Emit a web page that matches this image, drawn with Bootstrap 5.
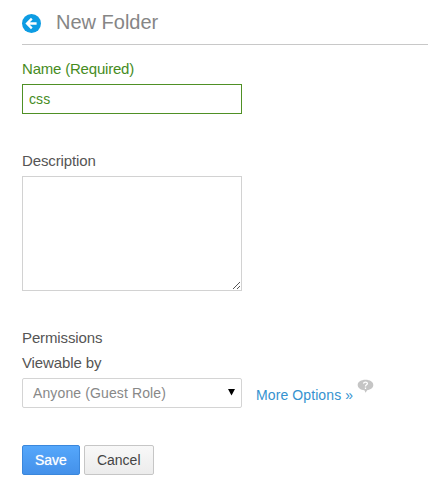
<!DOCTYPE html>
<html lang="en">
<head>
<meta charset="utf-8">
<meta name="viewport" content="width=device-width, initial-scale=1">
<title>New Folder</title>
<link rel="stylesheet" href="https://cdn.jsdelivr.net/npm/bootstrap@5.3.0/dist/css/bootstrap.min.css">
<style>
body{font-family:"Liberation Sans",Arial,sans-serif;font-size:15px;line-height:20px;color:#555;overflow:hidden}
.page{padding-left:22px}
.page-head{height:45px;border-bottom:1px solid #c8c8c8!important;padding-bottom:1px}
.page-head h1{font-size:20px;line-height:24px;color:#868686;font-weight:400;margin-left:15px}
.back-link{margin-top:3px}
.folder-form .form-label{display:block;margin:0;font-size:15px;line-height:20px;color:#555;letter-spacing:-.12px}
.folder-form .form-control,.folder-form .form-select{width:220px;border:1px solid #ccc;font-size:14px;box-shadow:none;background-color:#fff}
.folder-form .form-control{border-radius:0}
.name-group{padding-top:14px;height:92px}
.folder-form .name-group .form-label{color:#468c1e;letter-spacing:-.2px}
.folder-form .name-group .form-control{height:30px;margin-top:5px;padding:0 6px;color:#468c1e;border-color:#4f9025;letter-spacing:.1px}
.desc-group{height:175px;padding-top:14px}
.desc-group textarea.form-control{height:115px;margin-top:5px;resize:none;display:block;border-color:#d2d2d2}
.text-box{width:220px}
.grip{right:1px;bottom:1px}
.perm-group .form-label+.form-label{margin-top:5px!important}
.folder-form .form-select{height:30px;padding:0 30px 0 10px;color:#888;border-color:#d4d4d4;border-radius:2px;background-image:none;line-height:28px;letter-spacing:.12px}
.select-row{margin-top:5px}
.caret{right:7px;top:11px;pointer-events:none}
.more-link{font-size:14px;line-height:20px;color:#3592cf;margin:7px 0 0 14px;letter-spacing:.1px}
.help{margin:1px 0 0 4px}
.btn-form{height:30px;padding:0 12px;font-size:14px;line-height:28px;border-radius:2px}
.btn-save{color:#fff;background:linear-gradient(#55a7fb,#4491ea);border:1px solid #3a87dc;text-shadow:0 0 1px rgba(255,255,255,.7)}
.btn-cancel{color:#444;background:linear-gradient(#f8f8f8,#ececec);border:1px solid #c6c6c6}
.actions{margin-top:37px;gap:4px}
</style>
<script src="https://cdn.jsdelivr.net/npm/bootstrap@5.3.0/dist/js/bootstrap.bundle.min.js"></script>
</head>
<body class="bg-white">
<main class="page">
  <header class="page-head d-flex align-items-center border-bottom">
    <a href="#" class="back-link d-flex" aria-label="Back">
      <svg width="19" height="19" viewBox="0 0 19 19"><circle cx="9.5" cy="9.5" r="9.5" fill="#0d9ce3"/><path d="M9.800 4.600 5 9.500 9.800 14.400M5.500 9.500H14.600" fill="none" stroke="#fff" stroke-width="2.300"/></svg>
    </a>
    <h1 class="mb-0">New Folder</h1>
  </header>
  <form class="folder-form">
    <div class="name-group">
      <label class="form-label" for="name">Name (Required)</label>
      <input class="form-control" id="name" type="text" value="css">
    </div>
    <div class="desc-group">
      <label class="form-label" for="desc">Description</label>
      <div class="text-box position-relative">
        <textarea class="form-control" id="desc"></textarea>
        <svg class="grip position-absolute" width="9" height="9" viewBox="0 0 9 9"><path d="M1 8 8 1M5 8 8 5" stroke="#555" fill="none"/></svg>
      </div>
    </div>
    <div class="perm-group">
      <div class="form-label pt-3 mt-0">Permissions</div>
      <label class="form-label" for="view">Viewable by</label>
      <div class="select-row d-flex align-items-start">
        <div class="position-relative">
          <select class="form-select" id="view"><option>Anyone (Guest Role)</option></select>
          <svg class="caret position-absolute" width="7" height="7" viewBox="0 0 7 7"><path d="M0 0h7L3.5 6.5z" fill="#000"/></svg>
        </div>
        <a href="#" class="more-link text-decoration-none">More Options »</a>
        <svg class="help" width="17" height="14" viewBox="0 0 17 14"><path d="M8.5.8C13 .8 16.3 3 16.3 6c0 2.800-2.600 4.800-6.200 5.200L8.600 13.800 7.400 11.200C3.500 10.900.7 8.800.7 6 .7 3 4 .8 8.500.8z" fill="#c5c5c5"/><path d="M6.500 4.600C6.700 2.500 10.500 2.600 10.400 4.600 10.300 5.900 8.500 5.700 8.500 7.400M8.500 8.500V10" fill="none" stroke="#fff" stroke-width="1.300"/></svg>
      </div>
    </div>
    <div class="actions d-flex">
      <button type="button" class="btn btn-form btn-save">Save</button>
      <button type="button" class="btn btn-form btn-cancel">Cancel</button>
    </div>
  </form>
</main>
</body>
</html>
